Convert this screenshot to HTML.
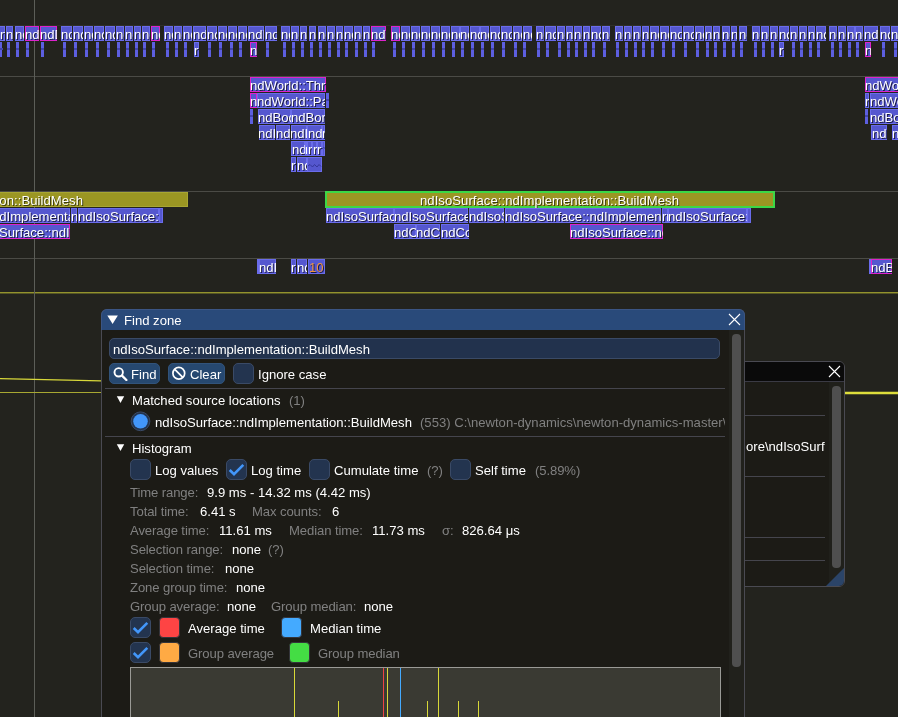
<!DOCTYPE html>
<html><head><meta charset="utf-8"><title>Tracy</title>
<style>
html,body{margin:0;padding:0}
body{width:898px;height:717px;overflow:hidden;background:#23231e;position:relative;font-family:"Liberation Sans",sans-serif;font-size:13.1px;line-height:15px;color:#fff}
div{position:absolute;box-sizing:border-box}
.z{height:15px;background:#5557cf;box-shadow:inset 0 0 0 1px #6a6ceb;overflow:hidden;white-space:nowrap}
.z i{position:absolute;top:1px;font-style:normal;color:#fff;text-shadow:1px 1px 0 #1a1a40}
.z.p{box-shadow:inset 0 0 0 1px #dd22cc}
.z.o{background:#9b9623;box-shadow:inset 0 0 0 1px #a8a632}
.z.o i{text-shadow:1px 1px 0 #3a3a10;letter-spacing:0.05px}
.z.g{box-shadow:inset 0 0 0 2px #3cd746;height:17px;top:191px !important;background:#9b9623}
.z.g i{top:2px}
.b{height:15px;background:#5d5fe0;border:0}
.b u{position:absolute;left:0;top:6px;width:3px;height:2px;background:#4244ae}
.hl{left:0;width:898px;height:1px;background:#4b4b46}
.t{white-space:nowrap;height:15px}
.g{color:#808080;letter-spacing:-0.1px}
.win{background:#1c1b16;border:1px solid #4a4a52;border-radius:6px}
.fr{background:#22324d;border-radius:5px;border:1px solid #3a4a66}
.cb{width:21px;height:21px;background:#23344f;border:1px solid #3a4a66;border-radius:5px}
.btn{background:#264870;border-radius:5px;height:21px;border:1px solid #31537b}
.sep{height:1px;background:#45454d}
.sq{width:21px;height:21px;border-radius:4px;border:1px solid #34343a}
</style></head><body><div id="root" style="left:0;top:0;width:898px;height:717px;will-change:transform">
<div class="hl" style="top:25px;background:#2f2f2a"></div>
<div class="hl" style="top:76px"></div>
<div class="hl" style="top:191px"></div>
<div class="hl" style="top:258px"></div>
<div class="hl" style="top:292px;height:2px;background:linear-gradient(#93932d,#93932d 50%,rgba(147,147,45,0.45) 50%)"></div>
<div style="left:34px;top:0;width:1px;height:717px;background:#5c5e58"></div>
<div class="z" style="left:-10px;top:26px;width:15px;"><i style="left:10px">ndBodyKin</i></div>
<div class="z" style="left:6px;top:26px;width:7px;"><i style="left:0px">ndBodyKin</i></div>
<div class="z" style="left:15px;top:26px;width:9px;"><i style="left:0px">ndBodyKin</i></div>
<div class="z p" style="left:25px;top:26px;width:14px;"><i style="left:0px">ndBodyKin</i></div>
<div class="z p" style="left:40px;top:26px;width:17px;"><i style="left:0px">ndDyn</i></div>
<div class="z" style="left:61px;top:26px;width:11px;"><i style="left:0px">ndBodyKin</i></div>
<div class="z" style="left:73px;top:26px;width:10px;"><i style="left:0px">ndBodyKin</i></div>
<div class="z" style="left:84px;top:26px;width:9px;"><i style="left:0px">ndBodyKin</i></div>
<div class="z" style="left:94px;top:26px;width:10px;"><i style="left:0px">ndBodyKin</i></div>
<div class="z" style="left:105px;top:26px;width:10px;"><i style="left:0px">ndBodyKin</i></div>
<div class="z" style="left:116px;top:26px;width:8px;"><i style="left:0px">ndBodyKin</i></div>
<div class="z" style="left:125px;top:26px;width:8px;"><i style="left:0px">ndBodyKin</i></div>
<div class="z" style="left:134px;top:26px;width:7px;"><i style="left:0px">ndBodyKin</i></div>
<div class="z" style="left:142px;top:26px;width:8px;"><i style="left:0px">ndBodyKin</i></div>
<div class="z p" style="left:151px;top:26px;width:9px;"><i style="left:0px">ndBodyKin</i></div>
<div class="z" style="left:164px;top:26px;width:9px;"><i style="left:0px">ndBodyKin</i></div>
<div class="z" style="left:174px;top:26px;width:8px;"><i style="left:0px">ndBodyKin</i></div>
<div class="z" style="left:183px;top:26px;width:9px;"><i style="left:0px">ndBodyKin</i></div>
<div class="z" style="left:193px;top:26px;width:13px;"><i style="left:0px">ndBodyKin</i></div>
<div class="z" style="left:207px;top:26px;width:10px;"><i style="left:0px">ndBodyKin</i></div>
<div class="z" style="left:218px;top:26px;width:9px;"><i style="left:0px">ndBodyKin</i></div>
<div class="z" style="left:228px;top:26px;width:9px;"><i style="left:0px">ndBodyKin</i></div>
<div class="z" style="left:238px;top:26px;width:9px;"><i style="left:0px">ndBodyKin</i></div>
<div class="z" style="left:248px;top:26px;width:16px;"><i style="left:0px">ndIso</i></div>
<div class="z" style="left:265px;top:26px;width:12px;"><i style="left:0px">ndBodyKin</i></div>
<div class="z" style="left:281px;top:26px;width:9px;"><i style="left:0px">ndBodyKin</i></div>
<div class="z" style="left:291px;top:26px;width:8px;"><i style="left:0px">ndBodyKin</i></div>
<div class="z" style="left:300px;top:26px;width:7px;"><i style="left:0px">ndBodyKin</i></div>
<div class="z" style="left:309px;top:26px;width:7px;"><i style="left:0px">ndBodyKin</i></div>
<div class="z" style="left:318px;top:26px;width:8px;"><i style="left:0px">ndBodyKin</i></div>
<div class="z" style="left:327px;top:26px;width:8px;"><i style="left:0px">ndBodyKin</i></div>
<div class="z" style="left:336px;top:26px;width:7px;"><i style="left:0px">ndBodyKin</i></div>
<div class="z" style="left:344px;top:26px;width:9px;"><i style="left:0px">ndBodyKin</i></div>
<div class="z" style="left:354px;top:26px;width:8px;"><i style="left:0px">ndBodyKin</i></div>
<div class="z" style="left:363px;top:26px;width:7px;"><i style="left:0px">ndBodyKin</i></div>
<div class="z p" style="left:371px;top:26px;width:15px;"><i style="left:0px">ndBodyKin</i></div>
<div class="z p" style="left:391px;top:26px;width:9px;"><i style="left:0px">ndBodyKin</i></div>
<div class="z" style="left:401px;top:26px;width:9px;"><i style="left:0px">ndBodyKin</i></div>
<div class="z" style="left:411px;top:26px;width:9px;"><i style="left:0px">ndBodyKin</i></div>
<div class="z" style="left:421px;top:26px;width:9px;"><i style="left:0px">ndBodyKin</i></div>
<div class="z" style="left:431px;top:26px;width:9px;"><i style="left:0px">ndBodyKin</i></div>
<div class="z" style="left:441px;top:26px;width:9px;"><i style="left:0px">ndBodyKin</i></div>
<div class="z" style="left:451px;top:26px;width:9px;"><i style="left:0px">ndBodyKin</i></div>
<div class="z" style="left:460px;top:26px;width:9px;"><i style="left:0px">ndBodyKin</i></div>
<div class="z" style="left:470px;top:26px;width:10px;"><i style="left:0px">ndBodyKin</i></div>
<div class="z" style="left:480px;top:26px;width:9px;"><i style="left:0px">ndBodyKin</i></div>
<div class="z" style="left:490px;top:26px;width:10px;"><i style="left:0px">ndBodyKin</i></div>
<div class="z" style="left:501px;top:26px;width:11px;"><i style="left:0px">ndBodyKin</i></div>
<div class="z" style="left:513px;top:26px;width:9px;"><i style="left:0px">ndBodyKin</i></div>
<div class="z" style="left:523px;top:26px;width:9px;"><i style="left:0px">ndBodyKin</i></div>
<div class="z" style="left:536px;top:26px;width:8px;"><i style="left:0px">ndBodyKin</i></div>
<div class="z" style="left:545px;top:26px;width:11px;"><i style="left:0px">ndBodyKin</i></div>
<div class="z" style="left:557px;top:26px;width:8px;"><i style="left:0px">ndBodyKin</i></div>
<div class="z" style="left:566px;top:26px;width:7px;"><i style="left:0px">ndBodyKin</i></div>
<div class="z" style="left:574px;top:26px;width:8px;"><i style="left:0px">ndBodyKin</i></div>
<div class="z" style="left:583px;top:26px;width:7px;"><i style="left:0px">ndBodyKin</i></div>
<div class="z" style="left:591px;top:26px;width:10px;"><i style="left:0px">ndBodyKin</i></div>
<div class="z" style="left:602px;top:26px;width:8px;"><i style="left:0px">ndBodyKin</i></div>
<div class="z" style="left:615px;top:26px;width:8px;"><i style="left:0px">ndBodyKin</i></div>
<div class="z" style="left:624px;top:26px;width:8px;"><i style="left:0px">ndBodyKin</i></div>
<div class="z" style="left:633px;top:26px;width:8px;"><i style="left:0px">ndBodyKin</i></div>
<div class="z" style="left:642px;top:26px;width:7px;"><i style="left:0px">ndBodyKin</i></div>
<div class="z" style="left:650px;top:26px;width:9px;"><i style="left:0px">ndBodyKin</i></div>
<div class="z" style="left:660px;top:26px;width:9px;"><i style="left:0px">ndBodyKin</i></div>
<div class="z" style="left:670px;top:26px;width:12px;"><i style="left:0px">ndBodyKin</i></div>
<div class="z" style="left:683px;top:26px;width:11px;"><i style="left:0px">ndBodyKin</i></div>
<div class="z" style="left:695px;top:26px;width:9px;"><i style="left:0px">ndBodyKin</i></div>
<div class="z" style="left:705px;top:26px;width:7px;"><i style="left:0px">ndBodyKin</i></div>
<div class="z" style="left:713px;top:26px;width:7px;"><i style="left:0px">ndBodyKin</i></div>
<div class="z" style="left:722px;top:26px;width:8px;"><i style="left:0px">ndBodyKin</i></div>
<div class="z" style="left:731px;top:26px;width:6px;"><i style="left:0px">ndBodyKin</i></div>
<div class="z" style="left:739px;top:26px;width:8px;"><i style="left:0px">ndBodyKin</i></div>
<div class="z" style="left:752px;top:26px;width:8px;"><i style="left:0px">ndBodyKin</i></div>
<div class="z" style="left:761px;top:26px;width:8px;"><i style="left:0px">ndBodyKin</i></div>
<div class="z" style="left:770px;top:26px;width:8px;"><i style="left:0px">ndBodyKin</i></div>
<div class="z" style="left:779px;top:26px;width:10px;"><i style="left:0px">ndBodyKin</i></div>
<div class="z" style="left:790px;top:26px;width:8px;"><i style="left:0px">ndBodyKin</i></div>
<div class="z" style="left:799px;top:26px;width:8px;"><i style="left:0px">ndBodyKin</i></div>
<div class="z" style="left:808px;top:26px;width:7px;"><i style="left:0px">ndBodyKin</i></div>
<div class="z" style="left:816px;top:26px;width:10px;"><i style="left:0px">ndBodyKin</i></div>
<div class="z" style="left:829px;top:26px;width:8px;"><i style="left:0px">ndBodyKin</i></div>
<div class="z" style="left:838px;top:26px;width:8px;"><i style="left:0px">ndBodyKin</i></div>
<div class="z" style="left:847px;top:26px;width:8px;"><i style="left:0px">ndBodyKin</i></div>
<div class="z" style="left:855px;top:26px;width:8px;"><i style="left:0px">ndBodyKin</i></div>
<div class="z" style="left:864px;top:26px;width:14px;"><i style="left:0px">ndBodyKin</i></div>
<div class="z" style="left:880px;top:26px;width:10px;"><i style="left:0px">ndBodyKin</i></div>
<div class="z" style="left:891px;top:26px;width:19px;"><i style="left:0px">ndBodyKin</i></div>
<div class="b" style="left:0px;top:42px;width:2px"><u></u></div>
<div class="b" style="left:7px;top:42px;width:3px"><u></u></div>
<div class="b" style="left:16px;top:42px;width:3px"><u></u></div>
<div class="b" style="left:26px;top:42px;width:3px"><u></u></div>
<div class="b" style="left:41px;top:42px;width:3px"><u></u></div>
<div class="b" style="left:63px;top:42px;width:3px"><u></u></div>
<div class="b" style="left:74px;top:42px;width:3px"><u></u></div>
<div class="b" style="left:85px;top:42px;width:3px"><u></u></div>
<div class="b" style="left:96px;top:42px;width:3px"><u></u></div>
<div class="b" style="left:107px;top:42px;width:3px"><u></u></div>
<div class="b" style="left:117px;top:42px;width:3px"><u></u></div>
<div class="b" style="left:126px;top:42px;width:3px"><u></u></div>
<div class="b" style="left:135px;top:42px;width:3px"><u></u></div>
<div class="b" style="left:143px;top:42px;width:3px"><u></u></div>
<div class="b" style="left:152px;top:42px;width:3px"><u></u></div>
<div class="b" style="left:166px;top:42px;width:3px"><u></u></div>
<div class="b" style="left:175px;top:42px;width:3px"><u></u></div>
<div class="b" style="left:184px;top:42px;width:3px"><u></u></div>
<div class="b" style="left:208px;top:42px;width:3px"><u></u></div>
<div class="b" style="left:219px;top:42px;width:3px"><u></u></div>
<div class="b" style="left:230px;top:42px;width:3px"><u></u></div>
<div class="b" style="left:239px;top:42px;width:3px"><u></u></div>
<div class="b" style="left:266px;top:42px;width:3px"><u></u></div>
<div class="b" style="left:283px;top:42px;width:3px"><u></u></div>
<div class="b" style="left:292px;top:42px;width:3px"><u></u></div>
<div class="b" style="left:301px;top:42px;width:3px"><u></u></div>
<div class="b" style="left:310px;top:42px;width:3px"><u></u></div>
<div class="b" style="left:319px;top:42px;width:3px"><u></u></div>
<div class="b" style="left:328px;top:42px;width:3px"><u></u></div>
<div class="b" style="left:337px;top:42px;width:3px"><u></u></div>
<div class="b" style="left:345px;top:42px;width:3px"><u></u></div>
<div class="b" style="left:355px;top:42px;width:3px"><u></u></div>
<div class="b" style="left:364px;top:42px;width:3px"><u></u></div>
<div class="b" style="left:372px;top:42px;width:3px"><u></u></div>
<div class="b" style="left:393px;top:42px;width:3px"><u></u></div>
<div class="b" style="left:402px;top:42px;width:3px"><u></u></div>
<div class="b" style="left:412px;top:42px;width:3px"><u></u></div>
<div class="b" style="left:422px;top:42px;width:3px"><u></u></div>
<div class="b" style="left:432px;top:42px;width:3px"><u></u></div>
<div class="b" style="left:442px;top:42px;width:3px"><u></u></div>
<div class="b" style="left:452px;top:42px;width:3px"><u></u></div>
<div class="b" style="left:461px;top:42px;width:3px"><u></u></div>
<div class="b" style="left:471px;top:42px;width:3px"><u></u></div>
<div class="b" style="left:481px;top:42px;width:3px"><u></u></div>
<div class="b" style="left:491px;top:42px;width:3px"><u></u></div>
<div class="b" style="left:502px;top:42px;width:3px"><u></u></div>
<div class="b" style="left:514px;top:42px;width:3px"><u></u></div>
<div class="b" style="left:523px;top:42px;width:3px"><u></u></div>
<div class="b" style="left:537px;top:42px;width:3px"><u></u></div>
<div class="b" style="left:546px;top:42px;width:3px"><u></u></div>
<div class="b" style="left:558px;top:42px;width:3px"><u></u></div>
<div class="b" style="left:567px;top:42px;width:3px"><u></u></div>
<div class="b" style="left:575px;top:42px;width:3px"><u></u></div>
<div class="b" style="left:584px;top:42px;width:3px"><u></u></div>
<div class="b" style="left:592px;top:42px;width:3px"><u></u></div>
<div class="b" style="left:603px;top:42px;width:3px"><u></u></div>
<div class="b" style="left:616px;top:42px;width:3px"><u></u></div>
<div class="b" style="left:625px;top:42px;width:3px"><u></u></div>
<div class="b" style="left:634px;top:42px;width:3px"><u></u></div>
<div class="b" style="left:642px;top:42px;width:3px"><u></u></div>
<div class="b" style="left:651px;top:42px;width:3px"><u></u></div>
<div class="b" style="left:662px;top:42px;width:3px"><u></u></div>
<div class="b" style="left:672px;top:42px;width:3px"><u></u></div>
<div class="b" style="left:684px;top:42px;width:3px"><u></u></div>
<div class="b" style="left:696px;top:42px;width:3px"><u></u></div>
<div class="b" style="left:706px;top:42px;width:3px"><u></u></div>
<div class="b" style="left:714px;top:42px;width:3px"><u></u></div>
<div class="b" style="left:723px;top:42px;width:3px"><u></u></div>
<div class="b" style="left:732px;top:42px;width:3px"><u></u></div>
<div class="b" style="left:740px;top:42px;width:3px"><u></u></div>
<div class="b" style="left:754px;top:42px;width:3px"><u></u></div>
<div class="b" style="left:762px;top:42px;width:3px"><u></u></div>
<div class="b" style="left:771px;top:42px;width:3px"><u></u></div>
<div class="b" style="left:792px;top:42px;width:3px"><u></u></div>
<div class="b" style="left:800px;top:42px;width:3px"><u></u></div>
<div class="b" style="left:809px;top:42px;width:3px"><u></u></div>
<div class="b" style="left:817px;top:42px;width:3px"><u></u></div>
<div class="b" style="left:831px;top:42px;width:3px"><u></u></div>
<div class="b" style="left:839px;top:42px;width:3px"><u></u></div>
<div class="b" style="left:848px;top:42px;width:3px"><u></u></div>
<div class="b" style="left:856px;top:42px;width:3px"><u></u></div>
<div class="b" style="left:882px;top:42px;width:3px"><u></u></div>
<div class="b" style="left:894px;top:42px;width:3px"><u></u></div>
<div class="z" style="left:194px;top:42px;width:5px;"><i style="left:0px">r</i></div>
<div class="z p" style="left:250px;top:42px;width:7px;"><i style="left:0px">n</i></div>
<div class="z" style="left:779px;top:42px;width:5px;"><i style="left:0px">r</i></div>
<div class="z p" style="left:865px;top:42px;width:6px;"><i style="left:0px">n</i></div>
<div class="z p" style="left:250px;top:77px;width:76px;"><i style="left:0px">ndWorld::ThreadFunction</i></div>
<div class="z p" style="left:250px;top:93px;width:7px;"><i style="left:0px">ndWorld</i></div>
<div class="z" style="left:257px;top:93px;width:68px;"><i style="left:0px">ndWorld::ParticleUpdate</i></div>
<div class="b" style="left:326px;top:93px;width:3px"><u></u></div>
<div class="b" style="left:250px;top:109px;width:3px"><u></u></div>
<div class="z" style="left:258px;top:109px;width:33px;"><i style="left:0px">ndBodyKin</i></div>
<div class="z" style="left:291px;top:109px;width:34px;"><i style="left:0px">ndBondKin</i></div>
<div class="z" style="left:259px;top:125px;width:16px;"><i style="left:-1px">ndIso</i></div>
<div class="z" style="left:276px;top:125px;width:14px;"><i style="left:0px">ndBody</i></div>
<div class="z" style="left:291px;top:125px;width:16px;"><i style="left:-1px">ndIso</i></div>
<div class="z" style="left:307px;top:125px;width:15px;"><i style="left:1px">ndr</i></div>
<div class="z" style="left:322px;top:125px;width:3px;"><i style="left:0px">rn</i></div>
<div class="z" style="left:291px;top:141px;width:14px;"><i style="left:1px">nd</i></div>
<div class="z" style="left:305px;top:141px;width:2px;"><i style="left:0px">nd</i></div>
<div class="z" style="left:307px;top:141px;width:5px;"><i style="left:1px">r</i></div>
<div class="z" style="left:312px;top:141px;width:5px;"><i style="left:1px">r</i></div>
<div class="z" style="left:317px;top:141px;width:5px;"><i style="left:0px">r</i></div>
<div class="z" style="left:322px;top:141px;width:3px;"><i style="left:0px"><svg width="4" height="15" style="position:absolute;left:0;top:-1px"><path d="M0 8 l1.5 -1.5 l2 1" stroke="#3c3ea0" fill="none" stroke-width="1"/></svg></i></div>
<div class="z" style="left:291px;top:157px;width:5px;"><i style="left:0px">rn</i></div>
<div class="z" style="left:297px;top:157px;width:10px;"><i style="left:0px">ndC</i></div>
<div class="z" style="left:307px;top:157px;width:15px;"><i style="left:0px"><svg width="15" height="15" style="position:absolute;left:0;top:0"><path d="M1 8 l2 -1.5 l2.5 2.5 l2 -2.5 l2.5 2.5 l2 -2.5 l2 2" stroke="#35379c" fill="none" stroke-width="1"/></svg></i></div>
<div class="z p" style="left:865px;top:77px;width:45px;"><i style="left:0px">ndWorld::ThreadFunction</i></div>
<div class="z" style="left:865px;top:93px;width:4px;"><i style="left:0px">rn</i></div>
<div class="z" style="left:870px;top:93px;width:40px;"><i style="left:0px">ndWorld::Update</i></div>
<div class="b" style="left:865px;top:109px;width:3px"><u></u></div>
<div class="z" style="left:870px;top:109px;width:40px;"><i style="left:0px">ndBodyKin</i></div>
<div class="z" style="left:871px;top:125px;width:16px;"><i style="left:1px">nd</i></div>
<div class="z" style="left:892px;top:125px;width:18px;"><i style="left:0px">ndBody</i></div>
<div class="z o" style="left:-10px;top:192px;width:198px;"><i style="left:-166px">ndIsoSurface::ndImplementation::BuildMesh</i></div>
<div class="z o g" style="left:325px;top:192px;width:450px;"><i style="left:95px">ndIsoSurface::ndImplementation::BuildMesh</i></div>
<div class="z" style="left:-10px;top:208px;width:80px;"><i style="left:2px">ndImplementation::Build</i></div>
<div class="z" style="left:71px;top:208px;width:6px;"><i style="left:0px">ndIso</i></div>
<div class="z" style="left:78px;top:208px;width:81px;"><i style="left:0px">ndIsoSurface::ndImpl</i></div>
<div class="z" style="left:159px;top:208px;width:4px;"></div>
<div class="z p" style="left:-10px;top:224px;width:80px;"><i style="left:-23px">ndIsoSurface::ndImplementation</i></div>
<div class="z" style="left:326px;top:208px;width:68px;"><i style="left:0px">ndIsoSurface::ndImpl</i></div>
<div class="z" style="left:394px;top:208px;width:74px;"><i style="left:0px">ndIsoSurface::ndImpl</i></div>
<div class="z" style="left:469px;top:208px;width:35px;"><i style="left:0px">ndIsoSurface::ndImpl</i></div>
<div class="z" style="left:505px;top:208px;width:156px;"><i style="left:0px">ndIsoSurface::ndImplementation::Bu</i></div>
<div class="z" style="left:662px;top:208px;width:6px;"><i style="left:0px">rn</i></div>
<div class="z" style="left:668px;top:208px;width:79px;"><i style="left:0px">ndIsoSurface::ndImpl</i></div>
<div class="z" style="left:747px;top:208px;width:4px;"></div>
<div class="z" style="left:394px;top:224px;width:22px;"><i style="left:0px">ndCalc</i></div>
<div class="z" style="left:416px;top:224px;width:24px;"><i style="left:0px">ndCalc</i></div>
<div class="z" style="left:441px;top:224px;width:28px;"><i style="left:0px">ndCcalc</i></div>
<div class="z p" style="left:570px;top:224px;width:93px;"><i style="left:0px">ndIsoSurface::ndImpl</i></div>
<div class="z" style="left:257px;top:259px;width:2px;"></div>
<div class="z" style="left:259px;top:259px;width:17px;"><i style="left:0px">ndIso</i></div>
<div class="z" style="left:291px;top:259px;width:5px;"><i style="left:0px">rn</i></div>
<div class="z" style="left:297px;top:259px;width:10px;"><i style="left:0px">ndC</i></div>
<div class="z" style="left:308px;top:259px;width:17px;"><i style="left:1px"><span style="color:#ee9540">10</span></i></div>
<div class="z" style="left:869px;top:259px;width:2px;"></div>
<div class="z p" style="left:871px;top:259px;width:21px;"><i style="left:0px">ndBody</i></div>
<!-- plot lines -->
<svg width="898" height="717" style="position:absolute;left:0;top:0">
<line x1="0" y1="378.6" x2="101" y2="380.9" stroke="#d8d83a" stroke-width="1.3"/>
<line x1="0" y1="392.5" x2="898" y2="392.5" stroke="#a8a832" stroke-width="1"/>
<line x1="845" y1="393" x2="898" y2="393" stroke="#dede3c" stroke-width="2.4"/>
</svg>
<div class="win" style="left:700px;top:361px;width:145px;height:226px;overflow:hidden"><div style="left:0;top:0;width:145px;height:20px;background:#0a0a0a;border-bottom:1px solid #3a3a44"></div><svg width="145" height="226" style="position:absolute;left:-1px;top:-1px"><path d="M129 5 L140 16 M140 5 L129 16" stroke="#fff" stroke-width="1.1" fill="none"/><rect x="129" y="21" width="15" height="205" fill="#20201b"/><rect x="132" y="25" width="9" height="182" rx="4" fill="#4f4f4f"/><path d="M125 226 L145 226 L145 206 Z" fill="#2b4468"/></svg><div class="sep" style="left:44px;top:53px;width:80px"></div><div class="sep" style="left:44px;top:114px;width:80px"></div><div class="sep" style="left:44px;top:175px;width:80px"></div><div class="sep" style="left:44px;top:198px;width:80px"></div><div class="t" style="left:45px;top:77px;width:79px;overflow:hidden">ore\ndIsoSurface.cpp</div></div>
<div class="win" style="left:101px;top:309px;width:644px;height:430px;overflow:hidden"><svg width="644" height="430" style="position:absolute;left:-1px;top:-1px"><rect x="628" y="21" width="15" height="410" fill="#21211c"/><rect x="631" y="25" width="9" height="333" rx="4" fill="#4f4f4f"/></svg></div>
<div style="left:101px;top:309px;width:644px;height:21px;background:#294a7a;border:1px solid #3b5584;border-bottom:0;border-radius:6px 6px 0 0"></div>
<svg width="644" height="21" style="position:absolute;left:101px;top:309px"><path d="M6.3 6.4 L16.9 6.4 L11.6 15 Z" fill="#fff"/><path d="M628 5 L639 16 M639 5 L628 16" stroke="#fff" stroke-width="1.1" fill="none"/></svg>
<div class="t " style="left:124px;top:313px;">Find zone</div>
<div class="fr" style="left:109px;top:338px;width:611px;height:21px"></div>
<div class="t " style="left:113px;top:342px;">ndIsoSurface::ndImplementation::BuildMesh</div>
<div class="btn" style="left:109px;top:363px;width:51px"></div>
<svg width="16" height="16" style="position:absolute;left:112px;top:365px"><circle cx="6.7" cy="7.3" r="4.2" fill="none" stroke="#fff" stroke-width="1.9"/><path d="M10 10.6 L14.4 15" stroke="#fff" stroke-width="2.3" stroke-linecap="round"/></svg>
<div class="t " style="left:131px;top:367px;">Find</div>
<div class="btn" style="left:168px;top:363px;width:57px"></div>
<svg width="16" height="16" style="position:absolute;left:171px;top:365px"><circle cx="7.8" cy="8.3" r="5.9" fill="none" stroke="#fff" stroke-width="1.7"/><path d="M3.8 4.3 L11.8 12.3" stroke="#fff" stroke-width="1.7"/></svg>
<div class="t " style="left:190px;top:367px;">Clear</div>
<div class="cb" style="left:233px;top:363px"></div>
<div class="t " style="left:258px;top:367px;">Ignore case</div>
<div class="sep" style="left:105px;top:388px;width:620px"></div>
<svg width="10" height="10" style="position:absolute;left:116px;top:395px"><path d="M0.8 1.2 L8.2 1.2 L4.5 8 Z" fill="#fff"/></svg>
<div class="t " style="left:132px;top:393px;">Matched source locations</div>
<div class="t g" style="left:289px;top:393px;">(1)</div>
<svg width="24" height="24" style="position:absolute;left:129px;top:410px"><circle cx="11.5" cy="11.3" r="9.4" fill="#23344f" stroke="#3a4a66" stroke-width="1"/><circle cx="11.5" cy="11.3" r="7.3" fill="#4296fa"/></svg>
<div class="t " style="left:155px;top:415px;">ndIsoSurface::ndImplementation::BuildMesh</div>
<div class="t g" style="left:420px;top:415px;width:305px;overflow:hidden;letter-spacing:0">(553) C:\newton-dynamics\newton-dynamics-master\newton-4.00</div>
<div class="sep" style="left:105px;top:436px;width:620px"></div>
<svg width="10" height="10" style="position:absolute;left:116px;top:443px"><path d="M0.8 1.2 L8.2 1.2 L4.5 8 Z" fill="#fff"/></svg>
<div class="t " style="left:132px;top:441px;">Histogram</div>
<div class="cb" style="left:130px;top:459px"></div>
<div class="t " style="left:155px;top:463px;">Log values</div>
<div class="cb" style="left:226px;top:459px"><svg width="21" height="21" style="position:absolute;left:-1px;top:-1px"><path d="M3.7 11 L8 15.2 L17.3 5.8" fill="none" stroke="#4296fa" stroke-width="2.6"/></svg></div>
<div class="t " style="left:251px;top:463px;">Log time</div>
<div class="cb" style="left:309px;top:459px"></div>
<div class="t " style="left:334px;top:463px;">Cumulate time</div>
<div class="t g" style="left:427px;top:463px;">(?)</div>
<div class="cb" style="left:450px;top:459px"></div>
<div class="t " style="left:475px;top:463px;">Self time</div>
<div class="t g" style="left:535px;top:463px;">(5.89%)</div>
<div class="t g" style="left:130px;top:485px;">Time range:</div>
<div class="t " style="left:207px;top:485px;">9.9 ms - 14.32 ms (4.42 ms)</div>
<div class="t g" style="left:130px;top:504px;">Total time:</div>
<div class="t " style="left:200px;top:504px;">6.41 s</div>
<div class="t g" style="left:252px;top:504px;">Max counts:</div>
<div class="t " style="left:332px;top:504px;">6</div>
<div class="t g" style="left:130px;top:523px;">Average time:</div>
<div class="t " style="left:219px;top:523px;">11.61 ms</div>
<div class="t g" style="left:289px;top:523px;">Median time:</div>
<div class="t " style="left:372px;top:523px;">11.73 ms</div>
<div class="t g" style="left:442px;top:523px;">σ:</div>
<div class="t " style="left:462px;top:523px;">826.64 μs</div>
<div class="t g" style="left:130px;top:542px;">Selection range:</div>
<div class="t " style="left:232px;top:542px;">none</div>
<div class="t g" style="left:268px;top:542px;">(?)</div>
<div class="t g" style="left:130px;top:561px;">Selection time:</div>
<div class="t " style="left:225px;top:561px;">none</div>
<div class="t g" style="left:130px;top:580px;">Zone group time:</div>
<div class="t " style="left:236px;top:580px;">none</div>
<div class="t g" style="left:130px;top:599px;">Group average:</div>
<div class="t " style="left:227px;top:599px;">none</div>
<div class="t g" style="left:271px;top:599px;">Group median:</div>
<div class="t " style="left:364px;top:599px;">none</div>
<div class="cb" style="left:130px;top:617px"><svg width="21" height="21" style="position:absolute;left:-1px;top:-1px"><path d="M3.7 11 L8 15.2 L17.3 5.8" fill="none" stroke="#4296fa" stroke-width="2.6"/></svg></div>
<div class="sq" style="left:159px;top:617px;background:#fe4444"></div>
<div class="t " style="left:188px;top:621px;">Average time</div>
<div class="sq" style="left:281px;top:617px;background:#44aaff"></div>
<div class="t " style="left:310px;top:621px;">Median time</div>
<div class="cb" style="left:130px;top:642px"><svg width="21" height="21" style="position:absolute;left:-1px;top:-1px"><path d="M3.7 11 L8 15.2 L17.3 5.8" fill="none" stroke="#4296fa" stroke-width="2.6"/></svg></div>
<div class="sq" style="left:159px;top:642px;background:#ffaa44"></div>
<div class="t g" style="left:188px;top:646px;">Group average</div>
<div class="sq" style="left:289px;top:642px;background:#44dd44"></div>
<div class="t g" style="left:318px;top:646px;">Group median</div>
<div style="left:130px;top:667px;width:591px;height:60px;background:#3a3a33;border:1px solid #9a9a96"></div>
<svg width="898" height="717" style="position:absolute;left:0;top:0"><line x1="294.5" y1="668" x2="294.5" y2="717" stroke="#d8d838" stroke-width="1"/><line x1="387.5" y1="668" x2="387.5" y2="717" stroke="#d8d838" stroke-width="1"/><line x1="438.5" y1="668" x2="438.5" y2="717" stroke="#d8d838" stroke-width="1"/><line x1="338.5" y1="701" x2="338.5" y2="717" stroke="#d8d838" stroke-width="1"/><line x1="427.5" y1="701" x2="427.5" y2="717" stroke="#d8d838" stroke-width="1"/><line x1="458.5" y1="701" x2="458.5" y2="717" stroke="#d8d838" stroke-width="1"/><line x1="478.5" y1="701" x2="478.5" y2="717" stroke="#d8d838" stroke-width="1"/><line x1="383.5" y1="668" x2="383.5" y2="717" stroke="#ee4444" stroke-width="1"/><line x1="400.5" y1="668" x2="400.5" y2="717" stroke="#44aaff" stroke-width="1"/></svg>
</div></body></html>
